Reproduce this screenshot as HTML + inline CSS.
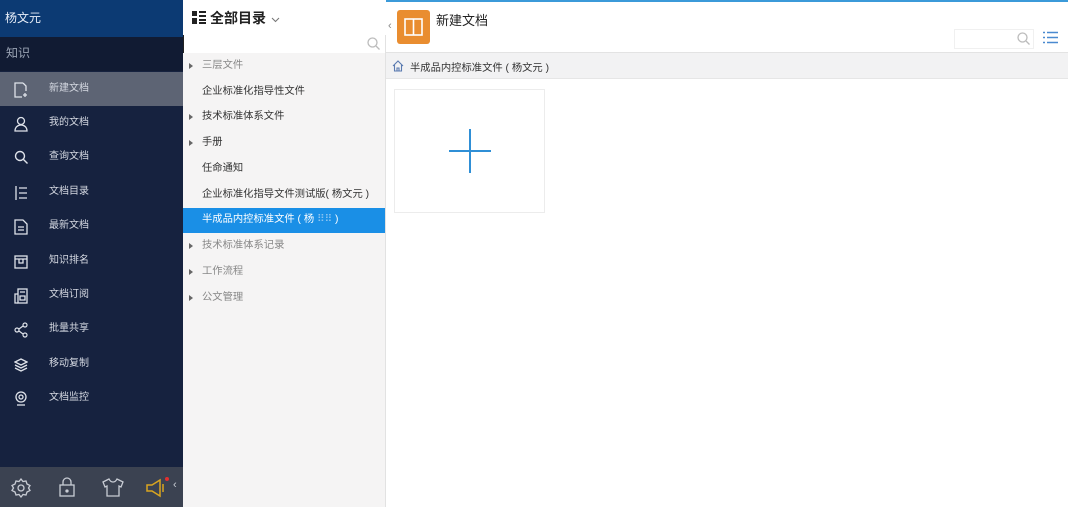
<!DOCTYPE html>
<html><head><meta charset="utf-8"><style>
*{margin:0;padding:0;box-sizing:border-box}
body{width:1068px;height:507px;overflow:hidden;position:relative;font-family:"Liberation Sans","Noto Sans CJK SC",sans-serif;font-size:12px;background:#fff}
.abs{position:absolute}
#side{left:0;top:0;width:183px;height:507px;background:#16223f}
#uh{left:0;top:0;width:183px;height:37px;background:#0c3a73;color:#e8eef8;font-size:12px;line-height:36px;padding-left:5px}
#kn{left:0;top:37px;width:183px;height:34px;background:#111b33;color:#9aa3b4;line-height:32px;padding-left:6px}
.it{left:0;width:183px;height:34px;color:#d5d9e2;line-height:34px;padding-left:49px;font-size:10px}
.it svg{position:absolute;left:14px;top:10px}
#bot{left:0;top:467px;width:183px;height:40px;background:#3b4251}
#mid{left:183px;top:0;width:203px;height:507px;background:#f5f4f4;border-right:1px solid #e2e2e2}
.tr{left:183px;width:203px;height:24px;line-height:24px;padding-left:19px;font-size:10.3px;color:#333}
.tr.g{color:#888}
.tr .ar{position:absolute;left:6px;top:9px;width:0;height:0;border-left:4px solid #666;border-top:3px solid transparent;border-bottom:3px solid transparent}
</style></head><body>
<div id="side" class="abs"></div>
<div id="uh" class="abs">杨文元</div>
<div id="kn" class="abs">知识</div>
<div class="abs" style="left:0;top:72px;width:183px;height:34px;background:#5d6474"></div>
<div class="abs it" style="top:72px">新建文档<svg width="14" height="16" viewBox="0 0 14 16" fill="none" stroke="#dfe3ea" stroke-width="1.3"><path d="M9 1H1v14h7M9 1l3 3v5"/><path d="M11 11v4M9 13h4"/></svg></div>
<div class="abs it" style="top:106px">我的文档<svg width="14" height="16" viewBox="0 0 14 16" fill="none" stroke="#dfe3ea" stroke-width="1.3"><circle cx="7" cy="5" r="3.5"/><path d="M1 15c0-4 3-6 6-6s6 2 6 6z"/></svg></div>
<div class="abs it" style="top:140px">查询文档<svg width="14" height="16" viewBox="0 0 14 16" fill="none" stroke="#dfe3ea" stroke-width="1.4"><circle cx="6" cy="6" r="4.5"/><path d="M9.5 9.5l4 4"/></svg></div>
<div class="abs it" style="top:175px">文档目录<svg width="14" height="16" viewBox="0 0 14 16" fill="none" stroke="#dfe3ea" stroke-width="1.3"><path d="M2 1v14M5 3h8M5 8h8M5 13h8"/></svg></div>
<div class="abs it" style="top:209px">最新文档<svg width="14" height="16" viewBox="0 0 14 16" fill="none" stroke="#dfe3ea" stroke-width="1.3"><path d="M1 1h8l4 4v10H1z"/><path d="M4 8h6M4 11h6"/></svg></div>
<div class="abs it" style="top:244px">知识排名<svg width="14" height="16" viewBox="0 0 14 16" fill="none" stroke="#dfe3ea" stroke-width="1.3"><rect x="1" y="2" width="12" height="12"/><path d="M1 5h12M5 5v4h4V5"/></svg></div>
<div class="abs it" style="top:278px">文档订阅<svg width="14" height="16" viewBox="0 0 14 16" fill="none" stroke="#dfe3ea" stroke-width="1.3"><rect x="4" y="1" width="9" height="14"/><path d="M4 6H1v9h3M6 4h5M6 8h5v4H6z"/></svg></div>
<div class="abs it" style="top:312px">批量共享<svg width="14" height="16" viewBox="0 0 14 16" fill="none" stroke="#dfe3ea" stroke-width="1.2"><circle cx="3" cy="8" r="2"/><circle cx="11" cy="3" r="2"/><circle cx="11" cy="13" r="2"/><path d="M5 7l4-3M5 9l4 3"/></svg></div>
<div class="abs it" style="top:347px">移动复制<svg width="14" height="16" viewBox="0 0 14 16" fill="none" stroke="#dfe3ea" stroke-width="1.3"><path d="M7 2l6 3-6 3-6-3z"/><path d="M1 8l6 3 6-3M1 11l6 3 6-3"/></svg></div>
<div class="abs it" style="top:381px">文档监控<svg width="14" height="16" viewBox="0 0 14 16" fill="none" stroke="#dfe3ea" stroke-width="1.3"><circle cx="7" cy="6" r="5"/><circle cx="7" cy="6" r="2"/><path d="M3 14h8"/></svg></div>
<div id="bot" class="abs">
<svg class="abs" style="left:11px;top:11px" width="20" height="20" viewBox="0 0 20 20" fill="none" stroke="#c8ccd4" stroke-width="1.3"><path d="M10 1l2 2.5 3-.5 1 3 3 1.5-1.5 2.5 1.5 2.5-3 1.5-1 3-3-.5L10 19l-2-2.5-3 .5-1-3-3-1.5L2.5 10 1 7.5 4 6l1-3 3 .5z"/><circle cx="10" cy="10" r="3"/></svg>
<svg class="abs" style="left:59px;top:10px" width="16" height="20" viewBox="0 0 16 20" fill="none" stroke="#c8ccd4" stroke-width="1.3"><rect x="1" y="8" width="14" height="11"/><path d="M4 8V5a4 4 0 018 0v3"/><circle cx="8" cy="14" r="1" fill="#c8ccd4"/></svg>
<svg class="abs" style="left:102px;top:11px" width="22" height="19" viewBox="0 0 22 19" fill="none" stroke="#c8ccd4" stroke-width="1.3"><path d="M7 1L1 4l2 5 2-1v10h12V8l2 1 2-5-6-3c-1 2-2 3-4 3S8 3 7 1z"/></svg>
<svg class="abs" style="left:146px;top:11px" width="24" height="20" viewBox="0 0 24 20" fill="none" stroke="#d9a520" stroke-width="1.5"><path d="M1 7h5l8-5v16l-8-5H1z"/><path d="M17 6v8"/></svg>
<div class="abs" style="left:165px;top:10px;width:4px;height:4px;border-radius:2px;background:#e03030"></div>
<div class="abs" style="left:173px;top:12px;color:#c8ccd4;font-size:11px">‹</div>
</div>

<div id="mid" class="abs"></div>
<div class="abs" style="left:183px;top:0;width:203px;height:35px;background:#fff"></div>
<svg class="abs" style="left:192px;top:11px" width="14" height="13" viewBox="0 0 14 13"><rect x="0" y="0" width="5" height="5" fill="#222"/><rect x="0" y="7" width="5" height="6" fill="#222"/><rect x="7" y="0" width="7" height="2" fill="#222"/><rect x="7" y="4" width="7" height="2" fill="#222"/><rect x="7" y="8" width="7" height="2" fill="#222"/><rect x="7" y="11" width="7" height="2" fill="#222"/></svg>
<div class="abs" style="left:210px;top:8px;font-size:14px;font-weight:bold;color:#222">全部目录</div>
<svg class="abs" style="left:271px;top:17px" width="9" height="6" viewBox="0 0 9 6" fill="none" stroke="#777" stroke-width="1.1"><path d="M1 1l3.5 3.5L8 1"/></svg>
<div class="abs" style="left:183px;top:35px;width:202px;height:18px;background:#fff;border-left:1px solid #222"></div>
<svg class="abs" style="left:367px;top:37px" width="13" height="13" viewBox="0 0 13 13" fill="none" stroke="#bbb" stroke-width="1.3"><circle cx="5.5" cy="5.5" r="4.5"/><path d="M9 9l3.5 3.5"/></svg>
<div class="abs tr g" style="top:54px"><i class="ar"></i>三层文件</div>
<div class="abs tr" style="top:80px">企业标准化指导性文件</div>
<div class="abs tr" style="top:105px"><i class="ar"></i>技术标准体系文件</div>
<div class="abs tr" style="top:131px"><i class="ar"></i>手册</div>
<div class="abs tr" style="top:157px">任命通知</div>
<div class="abs tr" style="top:183px">企业标准化指导文件测试版( 杨文元 )</div>
<div class="abs tr" style="top:208px;background:#1a8fe6;color:#fff;height:25px;width:202px">半成品内控标准文件 ( 杨 <span style="color:#8cc3f0">⠿⠿</span> )</div>
<div class="abs tr g" style="top:234px"><i class="ar"></i>技术标准体系记录</div>
<div class="abs tr g" style="top:260px"><i class="ar"></i>工作流程</div>
<div class="abs tr g" style="top:286px"><i class="ar"></i>公文管理</div>

<div class="abs" style="left:386px;top:0;width:682px;height:2px;background:#3b9ad9"></div>
<div class="abs" style="left:386px;top:52px;width:682px;height:27px;background:#f2f2f3;border-top:1px solid #e3e3e3;border-bottom:1px solid #e6e6e6"></div>
<div class="abs" style="left:388px;top:20px;color:#888;font-size:11px">‹</div>
<div class="abs" style="left:397px;top:10px;width:33px;height:34px;background:#e98d30;border-radius:3px"></div>
<svg class="abs" style="left:404px;top:18px" width="19" height="18" viewBox="0 0 19 18" fill="none" stroke="#fff" stroke-width="1.6"><rect x="1" y="1" width="17" height="16"/><path d="M9.5 1v16"/></svg>
<div class="abs" style="left:436px;top:10px;font-size:13px;color:#222">新建文档</div>
<div class="abs" style="left:954px;top:29px;width:80px;height:20px;border:1px solid #f0f0f0"></div>
<svg class="abs" style="left:1017px;top:32px" width="13" height="13" viewBox="0 0 13 13" fill="none" stroke="#bbb" stroke-width="1.3"><circle cx="5.5" cy="5.5" r="4.5"/><path d="M9 9l3.5 3.5"/></svg>
<svg class="abs" style="left:1043px;top:31px" width="15" height="13" viewBox="0 0 15 13" fill="none" stroke="#4a8ad0" stroke-width="1.4"><path d="M0 1.5h2M4 1.5h11M0 6.5h2M4 6.5h11M0 11.5h2M4 11.5h11"/></svg>
<svg class="abs" style="left:392px;top:60px" width="12" height="12" viewBox="0 0 12 12" fill="none" stroke="#5a7ab0" stroke-width="1.1"><path d="M1 6l5-5 5 5M2.5 5v6h7V5"/><path d="M5 11V8h2v3"/></svg>
<div class="abs" style="left:410px;top:59px;font-size:10.3px;color:#333">半成品内控标准文件 ( 杨文元 )</div>
<div class="abs" style="left:394px;top:89px;width:151px;height:124px;border:1px solid #ececec;background:#fff"></div>
<div class="abs" style="left:449px;top:150px;width:42px;height:2px;background:#2f8fd6"></div>
<div class="abs" style="left:469px;top:129px;width:2px;height:44px;background:#2f8fd6"></div>
</body></html>
